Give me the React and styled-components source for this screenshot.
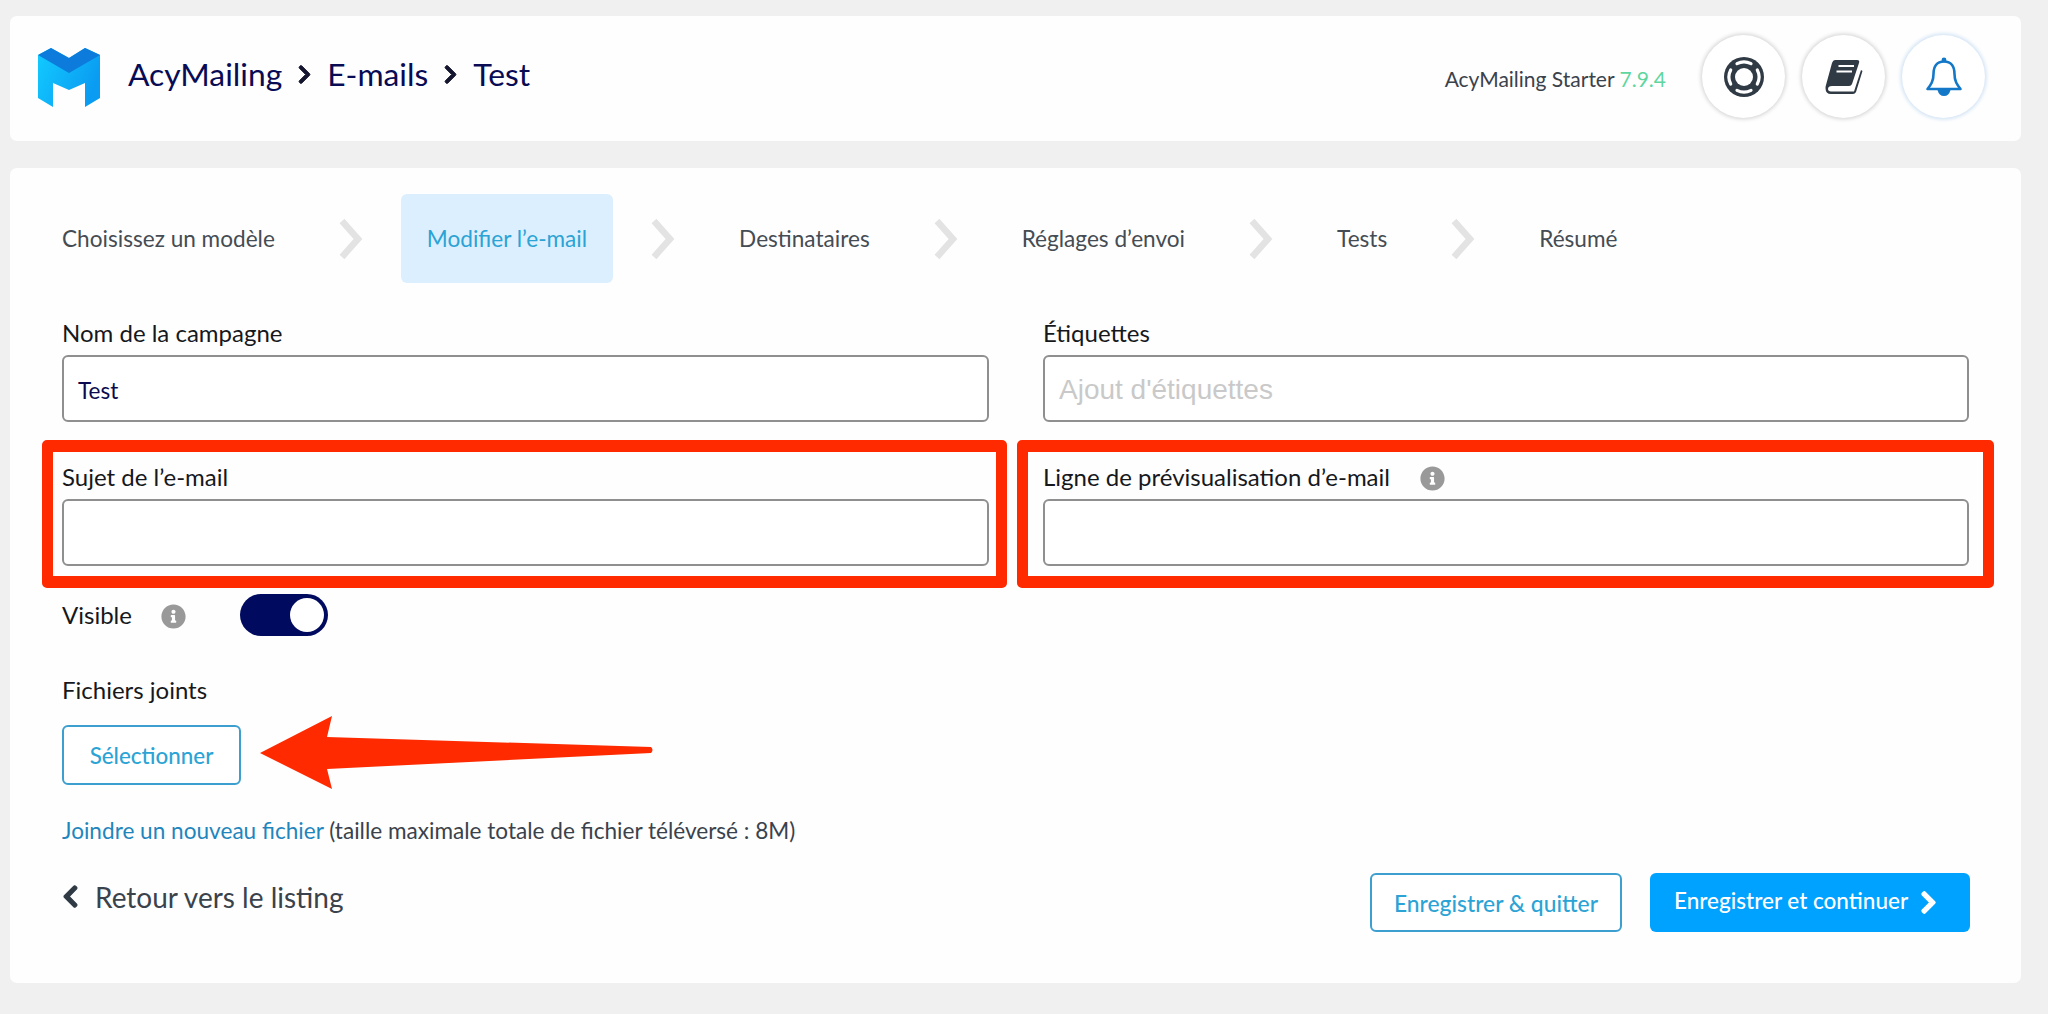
import React from "react";
import styled, { createGlobalStyle } from "styled-components";
import { FaInfoCircle, FaChevronLeft, FaChevronRight } from "react-icons/fa";

const Global = createGlobalStyle`
  html, body { margin: 0; padding: 0; background: #f0f0f0; }
  * { box-sizing: border-box; }
  body { font-family: Lato, "Noto Sans", sans-serif; overflow: hidden; }
`;

const Page = styled.div`
  width: 2048px;
  height: 1014px;
  padding: 16px 27px 31px 10px;
  display: flex;
  flex-direction: column;
  gap: 27px;
`;
const Card = styled.section`
  background: #fefefe;
  border-radius: 7px;
`;
const Header = styled(Card)`
  height: 125px;
  padding: 19px 36px 0 28px;
  display: flex;
  align-items: flex-start;
`;
const Brand = styled.div`
  display: flex;
  align-items: center;
  gap: 28px;
  height: 86px;
  margin-top: 1px;
  flex: 1;
`;
const Crumbs = styled.div`
  display: flex;
  align-items: center;
  gap: 12px;
  font-size: 31.8px;
  line-height: 40px;
  color: #090b55;
  margin-top: -10px;
`;
const CrumbSep = styled(FaChevronRight)`
  font-size: 21px;
  color: #14152f;
  stroke: currentColor;
  stroke-width: 24;
`;
const Version = styled.div`
  font-size: 21px;
  color: #3a424c;
  margin: 31px 36px 0 0;
`;
const VersionNo = styled.span`
  color: #5fd6a0;
`;
const RoundButtons = styled.div`
  display: flex;
  gap: 17px;
`;
const Round = styled.div`
  width: 83px;
  height: 83px;
  border-radius: 50%;
  background: #fff;
  display: flex;
  align-items: center;
  justify-content: center;
  box-shadow: 0 0 4px 1px ${(p) => (p.$active ? "#c6dcf2" : "#d0d0d0")};
`;
const Main = styled(Card)`
  height: 815px;
  padding: 26px 52px 0;
  display: flex;
  flex-direction: column;
`;
const Steps = styled.nav`
  display: flex;
  align-items: center;
  gap: 38px;
  margin-left: -26px;
`;
const Step = styled.div`
  height: 89px;
  padding: 0 26px;
  display: flex;
  align-items: center;
  border-radius: 6px;
  font-size: 22.6px;
  color: ${(p) => (p.$active ? "#2ba3d5" : "#454c53")};
  background: ${(p) => (p.$active ? "#dcefff" : "transparent")};
`;
const Grid = styled.div`
  display: grid;
  grid-template-columns: 927px 926px;
  column-gap: 54px;
  row-gap: 40px;
  margin-top: 35px;
`;
const Field = styled.div`
  position: relative;
  display: flex;
  flex-direction: column;
  gap: 7px;
`;
const Highlight = styled.div`
  position: absolute;
  top: -22px;
  bottom: -22px;
  left: -${(p) => p.$left}px;
  right: -${(p) => p.$right}px;
  border: 11px solid #ff2a00;
  border-top-width: 12px;
  border-bottom-width: 12px;
  border-radius: 5px;
  pointer-events: none;
`;
const Label = styled.label`
  display: flex;
  align-items: center;
  font-size: 24px;
  line-height: 30px;
  color: #16181c;
`;
const Input = styled.input`
  width: 100%;
  height: 67px;
  padding: 3px 14px 0;
  border: 2px solid #8f8f8f;
  border-radius: 6px;
  background: #fff;
  font-family: Lato, sans-serif;
  font-size: 22.5px;
  color: #0a0a50;
  outline: none;
  &::placeholder {
    font-family: "Liberation Sans", Arial, sans-serif;
    font-size: 28px;
    color: #c9c9c9;
    opacity: 1;
  }
`;
const Info = styled(FaInfoCircle)`
  font-size: 25px;
  color: #999;
  margin: 3px 0 0 ${(p) => p.$gap}px;
  flex: none;
`;
const VisibleRow = styled.div`
  display: flex;
  align-items: center;
  margin-top: 28px;
  height: 42px;
`;
const Toggle = styled.div`
  width: 88px;
  height: 42px;
  margin-left: 54px;
  border-radius: 21px;
  background: #000a5f;
  padding: 4px;
  display: flex;
  justify-content: flex-end;
`;
const Knob = styled.div`
  width: 34px;
  height: 34px;
  border-radius: 50%;
  background: #fff;
`;
const SectionLabel = styled(Label)`
  margin-top: 39px;
`;
const OutlineButton = styled.button`
  height: ${(p) => p.$h}px;
  width: ${(p) => p.$w}px;
  padding: 0;
  border: 2px solid #3d9fcf;
  border-radius: 6px;
  background: #fff;
  color: #2ba3d5;
  font-family: Lato, sans-serif;
  font-size: ${(p) => p.$fs}px;
  font-weight: 500;
`;
const AttachRow = styled.div`
  position: relative;
  margin-top: 20px;
  display: flex;
`;
const Arrow = styled.svg`
  position: absolute;
  left: 198px;
  top: -9px;
`;
const Note = styled.p`
  margin: 31px 0 0;
  font-size: 22.6px;
  line-height: 30px;
  color: #3a424c;
`;
const Link = styled.a`
  color: #1f86bd;
`;
const Footer = styled.div`
  display: flex;
  align-items: center;
  margin: 27px -1px 0 0;
  height: 59px;
`;
const Back = styled.div`
  display: flex;
  align-items: center;
  gap: 12px;
  flex: 1;
  font-size: 28px;
  color: #3a424c;
  margin-top: -12px;
`;
const BackIcon = styled(FaChevronLeft)`
  font-size: 25px;
  color: #2f3a44;
  margin-left: -4px;
  stroke: currentColor;
  stroke-width: 24;
`;
const FooterActions = styled.div`
  display: flex;
  gap: 28px;
`;
const PrimaryButton = styled.button`
  width: 320px;
  height: 59px;
  padding: 0 0 4px 24px;
  border: 0;
  border-radius: 6px;
  background: #00a2ff;
  color: #fff;
  font-family: Lato, sans-serif;
  font-size: 22.5px;
  font-weight: 500;
  display: flex;
  align-items: center;
  gap: 8px;
`;
const PrimaryChevron = styled(FaChevronRight)`
  font-size: 25px;
  margin-top: 4px;
  stroke: currentColor;
  stroke-width: 30;
`;
const Logo = styled.svg`
  flex: none;
  margin-top: -2px;
`;
const StepArrow = styled.svg`
  flex: none;
`;

const steps = ["Choisissez un modèle", "Modifier l’e-mail", "Destinataires", "Réglages d’envoi", "Tests", "Résumé"];

export default function App() {
  return (
    <Page>
      <Global />
      <Header>
        <Brand>
          <Logo width="62" height="60" viewBox="0 0 62 60">
            <defs>
              <linearGradient id="lg" x1="0" y1="0" x2="1" y2="0.4">
                <stop offset="0" stopColor="#12cbff" />
                <stop offset="1" stopColor="#0a9cf2" />
              </linearGradient>
            </defs>
            <path d="M0 7 L13 0 L31 10 L47 0 L62 7 V50 L47 59 V35 L31 42 L15 35 V59 L0 50 Z" fill="url(#lg)" />
            <path d="M0 7 L13 0 L31 10 L47 0 L62 7 L31 25 Z" fill="#0c7bdc" />
          </Logo>
          <Crumbs>
            <span>AcyMailing</span>
            <CrumbSep />
            <span>E-mails</span>
            <CrumbSep />
            <span>Test</span>
          </Crumbs>
        </Brand>
        <Version>
          AcyMailing Starter <VersionNo>7.9.4</VersionNo>
        </Version>
        <RoundButtons>
          <Round>
            <svg width="40" height="40" viewBox="0 0 40 40">
              <circle cx="20" cy="20" r="20" fill="#2f3a44" />
              <circle cx="20" cy="20" r="9" fill="#fff" />
              <g fill="none" stroke="#fff" strokeWidth="3.2" strokeLinecap="round">
                <path d="M13 6.7 A 15 15 0 0 1 27 6.7" />
                <path d="M13 33.3 A 15 15 0 0 0 27 33.3" />
                <path d="M6.7 13 A 15 15 0 0 0 6.7 27" />
                <path d="M33.3 13 A 15 15 0 0 1 33.3 27" />
              </g>
            </svg>
          </Round>
          <Round>
            <svg width="38" height="36" viewBox="0 0 38 36">
              <path d="M10 1 H32 Q35 1 34 4 L27 25 Q26.3 27 24 27 H7 Q3 27 3 30 Q3 32.4 6 32.4 H29 L36 11 L37.5 12 L31 33 Q30 35 28 35 H6 Q0.5 35 0.5 29 Q0.5 27.5 1 26 L7 4 Q8 1 10 1 Z" fill="#2f3a44" />
              <path d="M13.5 7 H29 M11.5 12.5 H27" stroke="#fff" strokeWidth="2.2" />
            </svg>
          </Round>
          <Round $active>
            <svg width="38" height="40" viewBox="0 0 38 40">
              <path d="M19 4.5 C11.5 4.5 8.5 10 8.5 17 C8.5 24 6 27.5 2.5 32 H35.5 C32 27.5 29.5 24 29.5 17 C29.5 10 26.5 4.5 19 4.5 Z" fill="none" stroke="#1478c8" strokeWidth="2.6" strokeLinejoin="round" />
              <circle cx="19" cy="3" r="2.4" fill="#1478c8" />
              <path d="M12.5 33 H25.5 Q24 39 19 39 Q14 39 12.5 33 Z" fill="#1478c8" />
            </svg>
          </Round>
        </RoundButtons>
      </Header>
      <Main>
        <Steps>
          {steps.map((s, i) => (
            <React.Fragment key={s}>
              {i > 0 && (
                <StepArrow width="24" height="42" viewBox="0 0 24 42">
                  <path d="M3 3 L19 21 L3 39" fill="none" stroke="#e3e3e3" strokeWidth="6.5" />
                </StepArrow>
              )}
              <Step $active={i === 1}>{s}</Step>
            </React.Fragment>
          ))}
        </Steps>
        <Grid>
          <Field>
            <Label>Nom de la campagne</Label>
            <Input readOnly value="Test" />
          </Field>
          <Field>
            <Label>Étiquettes</Label>
            <Input readOnly placeholder="Ajout d'étiquettes" />
          </Field>
          <Field>
            <Highlight $left={20} $right={18} />
            <Label>Sujet de l’e-mail</Label>
            <Input readOnly />
          </Field>
          <Field>
            <Highlight $left={26} $right={25} />
            <Label>
              Ligne de prévisualisation d’e-mail
              <Info $gap={30} />
            </Label>
            <Input readOnly />
          </Field>
        </Grid>
        <VisibleRow>
          <Label>
            Visible
            <Info $gap={29} />
          </Label>
          <Toggle><Knob /></Toggle>
        </VisibleRow>
        <SectionLabel>Fichiers joints</SectionLabel>
        <AttachRow>
          <OutlineButton $h={60} $w={179} $fs={22.4}>Sélectionner</OutlineButton>
          <Arrow width="395" height="75" viewBox="0 0 395 75">
            <path d="M0 37 L72 0 L67 21 L391 31 Q394 34 391 37 L67 53 L72 73 Z" fill="#ff2a00" />
          </Arrow>
        </AttachRow>
        <Note>
          <Link>Joindre un nouveau fichier</Link> (taille maximale totale de fichier téléversé : 8M)
        </Note>
        <Footer>
          <Back>
            <BackIcon />
            Retour vers le listing
          </Back>
          <FooterActions>
            <OutlineButton $h={59} $w={252} $fs={22.8}>Enregistrer &amp; quitter</OutlineButton>
            <PrimaryButton>
              Enregistrer et continuer
              <PrimaryChevron />
            </PrimaryButton>
          </FooterActions>
        </Footer>
      </Main>
    </Page>
  );
}
